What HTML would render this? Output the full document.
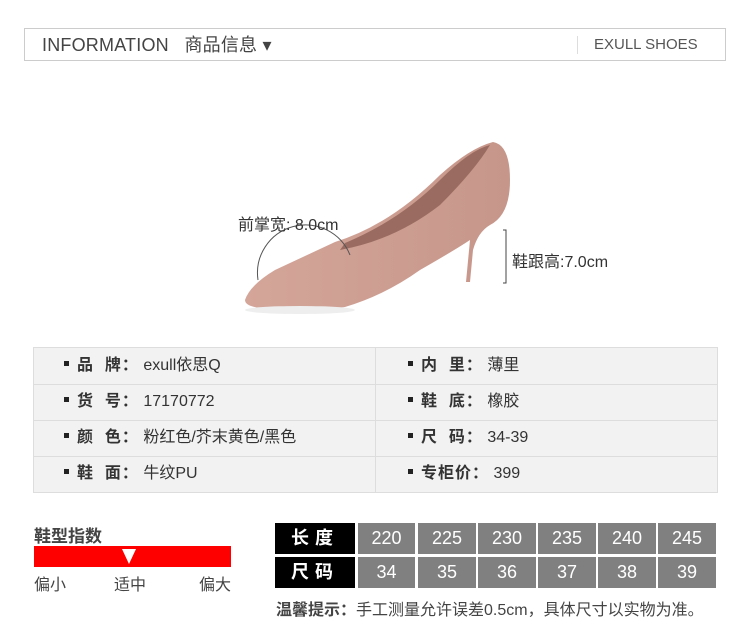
<!DOCTYPE html>
<html><head><meta charset="utf-8"><style>
body{margin:0;width:750px;height:642px;background:#fff;position:relative;font-family:"Liberation Sans","Noto Sans CJK SC",sans-serif;overflow:hidden}
.a{position:absolute}
.hdr{left:24px;top:28px;width:700px;height:31px;border:1px solid #ccc}
.t{font-size:15px;color:#333;white-space:nowrap}
.tb{left:33px;top:347px;width:683px;height:144px;border:1px solid #ddd;background:#f2f2f2}
.row{position:absolute;left:0;width:683px;height:36px;border-top:1px solid #ddd;box-sizing:border-box}
.cell{position:absolute;top:0;height:36px;line-height:34px;font-size:16px;color:#333}
.cell b{font-weight:bold;letter-spacing:1px}
.sq{display:inline-block;width:5px;height:5px;background:#222;vertical-align:middle;margin-right:8px;position:relative;top:-2px}
.bk{background:#000;color:#fff;font-weight:bold;font-size:18px;text-align:center;line-height:31px;letter-spacing:6px;height:31px}
.gr{background:#808080;color:#fff;font-size:18px;text-align:center;line-height:31px;height:31px}
</style></head><body>
<div class="a hdr"></div>
<div class="a t" style="left:42px;top:31px;font-size:18px;color:#444;letter-spacing:0.2px">INFORMATION&nbsp;&nbsp;&nbsp;商品信息 ▾</div>
<div class="a" style="left:577px;top:36px;width:1px;height:18px;background:#ddd"></div>
<div class="a t" style="left:594px;top:36px;color:#555">EXULL SHOES</div>

<svg class="a" style="left:230px;top:130px" width="300" height="200" viewBox="230 130 300 200">
<defs><linearGradient id="g" x1="0" y1="0" x2="1" y2="0"><stop offset="0" stop-color="#d4a599"/><stop offset="1" stop-color="#c6968a"/></linearGradient></defs>
<path d="M245 300 Q250 285 275 270 L335 242 Q390 225 440 175 Q470 148 493 142 Q510 145 510 180 Q510 215 490 225 Q478 232 473 250 L470 282 L466 282 L470 240 Q455 250 420 270 Q385 295 345 307 Q300 314 260 308 Q245 306 245 300Z" fill="url(#g)"/>
<path d="M340 250 Q395 240 440 205 Q475 170 490 145 Q470 150 440 180 Q400 220 345 243Z" fill="#9a6b60"/>
<ellipse cx="300" cy="310" rx="55" ry="4" fill="#eee"/>
<path d="M258 280 A48 48 0 0 1 350 255" fill="none" stroke="#555" stroke-width="1"/>
<path d="M503 230 H506 V283 H503" fill="none" stroke="#444" stroke-width="1"/>
</svg>
<div class="a t" style="left:238px;top:211px;color:#333;font-size:16px">前掌宽: 8.0cm</div>
<div class="a t" style="left:512px;top:248px;color:#333;font-size:16px">鞋跟高:7.0cm</div>

<div class="a tb">
<div class="row" style="top:0;border-top:0"></div>
<div class="row" style="top:36px"></div>
<div class="row" style="top:72px"></div>
<div class="row" style="top:108px"></div>
<div class="a" style="left:341px;top:0;width:1px;height:144px;background:#ddd"></div>
<div class="cell" style="left:30px;top:1px"><span class="sq"></span><b>品&nbsp;&nbsp;牌：</b>&nbsp;exull依思Q</div>
<div class="cell" style="left:30px;top:37px"><span class="sq"></span><b>货&nbsp;&nbsp;号：</b>&nbsp;17170772</div>
<div class="cell" style="left:30px;top:73px"><span class="sq"></span><b>颜&nbsp;&nbsp;色：</b>&nbsp;粉红色/芥末黄色/黑色</div>
<div class="cell" style="left:30px;top:109px"><span class="sq"></span><b>鞋&nbsp;&nbsp;面：</b>&nbsp;牛纹PU</div>
<div class="cell" style="left:374px;top:1px"><span class="sq"></span><b>内&nbsp;&nbsp;里：</b>&nbsp;薄里</div>
<div class="cell" style="left:374px;top:37px"><span class="sq"></span><b>鞋&nbsp;&nbsp;底：</b>&nbsp;橡胶</div>
<div class="cell" style="left:374px;top:73px"><span class="sq"></span><b>尺&nbsp;&nbsp;码：</b>&nbsp;34-39</div>
<div class="cell" style="left:374px;top:109px"><span class="sq"></span><b>专柜价：</b>&nbsp;399</div>
</div>

<div class="a t" style="left:34px;top:522px;font-weight:bold;font-size:17px;color:#444">鞋型指数</div>
<div class="a" style="left:34px;top:546px;width:197px;height:21px;background:#f00"></div>
<svg class="a" style="left:122px;top:549px" width="14" height="16"><path d="M0 0 H14 L7 15Z" fill="#fff"/></svg>
<div class="a t" style="left:34px;top:571px;color:#444;font-size:16px">偏小</div>
<div class="a t" style="left:114px;top:571px;color:#444;font-size:16px">适中</div>
<div class="a t" style="left:199px;top:571px;color:#444;font-size:16px">偏大</div>

<div class="a bk" style="left:275px;top:523px;width:80px">长度</div>
<div class="a bk" style="left:275px;top:557px;width:80px">尺码</div>
<div class="a gr" style="left:358px;top:523px;width:57px">220</div>
<div class="a gr" style="left:418px;top:523px;width:58px">225</div>
<div class="a gr" style="left:478px;top:523px;width:58px">230</div>
<div class="a gr" style="left:538px;top:523px;width:58px">235</div>
<div class="a gr" style="left:598px;top:523px;width:58px">240</div>
<div class="a gr" style="left:658px;top:523px;width:58px">245</div>
<div class="a gr" style="left:358px;top:557px;width:57px">34</div>
<div class="a gr" style="left:418px;top:557px;width:58px">35</div>
<div class="a gr" style="left:478px;top:557px;width:58px">36</div>
<div class="a gr" style="left:538px;top:557px;width:58px">37</div>
<div class="a gr" style="left:598px;top:557px;width:58px">38</div>
<div class="a gr" style="left:658px;top:557px;width:58px">39</div>
<div class="a t" style="left:276px;top:596px;font-size:16px;color:#444"><b>温馨提示：</b>手工测量允许误差0.5cm，具体尺寸以实物为准。</div>
</body></html>
